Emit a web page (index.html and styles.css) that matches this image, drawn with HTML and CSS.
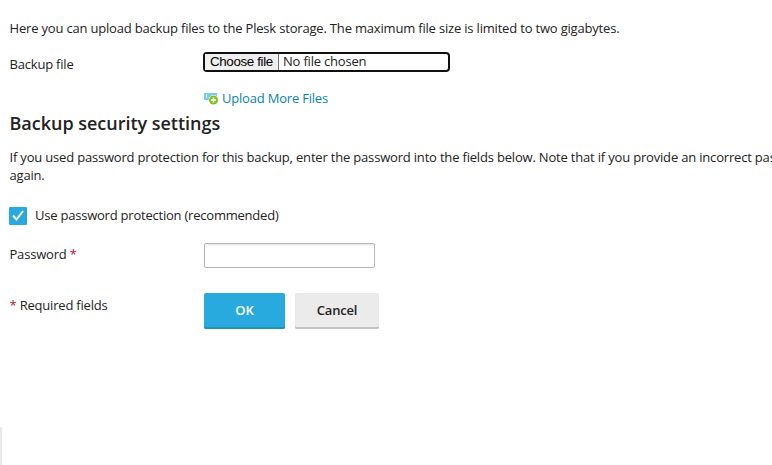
FILE: index.html
```html
<!DOCTYPE html>
<html lang="en">
<head>
<meta charset="utf-8">
<title>Upload Backup Files</title>
<link rel="stylesheet" href="styles.css">
</head>
<body>
<main class="page">
  <p class="intro">Here you can upload backup files to the Plesk storage. The maximum file size is limited to two gigabytes.</p>
  <div class="row row-file">
    <span class="label">Backup file</span>
    <div class="file"><span class="file-btn">Choose file</span><span class="file-name">No file chosen</span></div>
  </div>
  <a class="more">
    <svg class="more-icon" width="16" height="16" viewBox="0 0 16 16">
      <rect x="0" y="3" width="13" height="7" fill="#7accee"/>
      <path d="M2.500 4v4" stroke="#d8f0fa"/>
      <circle cx="9.500" cy="10" r="5" fill="#fff"/>
      <circle cx="9.500" cy="10" r="4.500" fill="#7fc41c"/>
      <path d="M9.500 7.500v5M7 10h5" stroke="#fff" stroke-width="1.700"/>
    </svg>
    <span>Upload More Files</span>
  </a>
  <h2 class="heading">Backup security settings</h2>
  <p class="note">If you used password protection for this backup, enter the password into the fields below. Note that if you provide an incorrect pas<br>again.</p>
  <div class="check">
    <span class="box"><svg width="18" height="18" viewBox="0 0 18 18"><path d="M4 8.500l3.500 4L14 4" fill="none" stroke="#fff" stroke-width="2"/></svg></span>
    <span class="check-text">Use password protection (recommended)</span>
  </div>
  <div class="row row-password">
    <span class="label">Password <b class="req">*</b></span>
    <input class="password" type="password">
  </div>
  <div class="row row-actions">
    <span class="label"><b class="req">*</b> Required fields</span>
    <button class="btn ok">OK</button>
    <button class="btn cancel">Cancel</button>
  </div>
</main>
<div class="edge"></div>
</body>
</html>
```
FILE: styles.css
```css
* { box-sizing: border-box; }
body { margin: 0; height: 465px; overflow: hidden; background: #fff; color: #222; font: 13px/18px "Open Sans", sans-serif; letter-spacing: -0.2px; display: flex; flex-direction: column; }
p, h2 { margin: 0; }
.page { padding: 19px 0 0 9px; height: 427px; white-space: nowrap; overflow: hidden; }
.intro, .note { letter-spacing: -0.185px; padding-left: 0.5px; }
.row { display: flex; }
.label { width: 195px; flex: none; padding-left: 0.5px; }
.row-file { margin-top: 15px; height: 20px; }
.row-file .label { padding-top: 3px; }
.file { margin-left: -1px; width: 247px; height: 20px; border: 2px solid #101010; border-radius: 4px; display: flex; line-height: 15px; }
.file-btn { width: 74px; padding-left: 5px; background: #efefef; border-right: 1px solid #767676; font: 13.333px/15px "Liberation Sans", sans-serif; letter-spacing: -0.35px; color: #000; }
.file-name { padding-left: 4px; }
.more { display: flex; margin: 17px 0 0 195px; height: 18px; color: #0a82ae; }
.more-icon { margin-top: 1px; margin-right: 2px; }
.heading { margin-top: 4px; padding-left: 0.5px; font-size: 18px; line-height: 25px; font-weight: 600; letter-spacing: -0.02px; }
.note { margin-top: 12px; }
.check { display: flex; margin-top: 23px; gap: 8px; height: 18px; }
.check-text { line-height: 17px; letter-spacing: -0.22px; }
.box { width: 18px; height: 18px; background: #28aade; border-radius: 1px; }
.box svg { display: block; }
.row-password { margin-top: 18px; height: 25px; }
.row-password .label { padding-top: 2px; }
.req { color: #c00f2b; font-weight: 400; }
.password { width: 171px; height: 25px; border: 1px solid #b5b5b5; border-radius: 2px; padding: 0 6px; box-shadow: inset 0 2px 1px #f0f0f0; }
.row-actions { margin-top: 25px; height: 36px; }
.row-actions .label { padding-top: 3px; }
.btn { height: 36px; border: 0; border-radius: 2px; padding: 0 0 2px; font: 600 13px/34px "Open Sans", sans-serif; }
.ok { width: 81px; margin-right: 10px; background: #28aade; color: #fff; box-shadow: inset 0 -2px #2492bf; }
.cancel { width: 84px; background: #ebebeb; color: #222; letter-spacing: -0.2px; box-shadow: inset 0 -2px #c2c2c2; }
.edge { width: 2px; height: 38px; background: #e8e8e8; border-top-right-radius: 2px; }
```
